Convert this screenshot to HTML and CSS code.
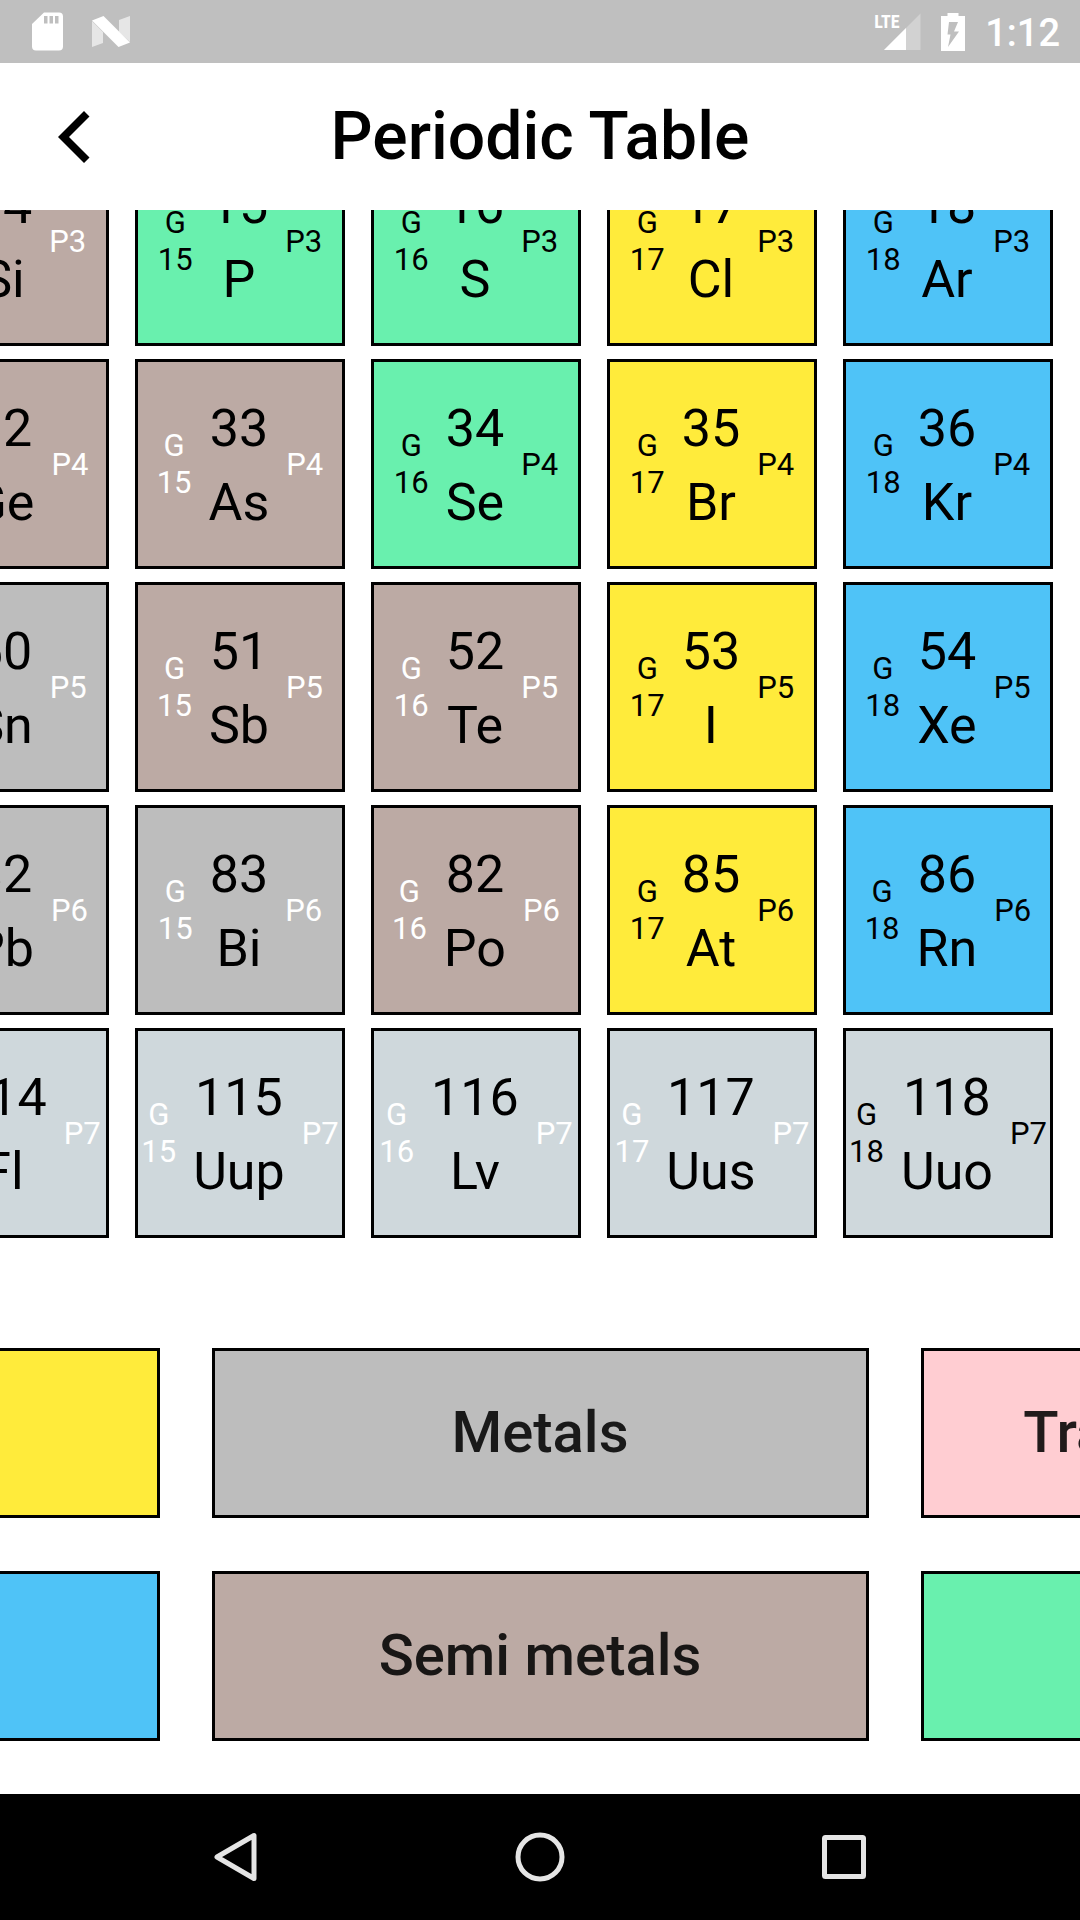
FILE: index.html
```html
<!DOCTYPE html>
<html lang="en">
<head>
<meta charset="utf-8">
<meta name="viewport" content="width=device-width, initial-scale=1">
<title>Periodic Table</title>
<link rel="stylesheet" href="styles.css">
</head>
<body>
<div class="status-bar">
  <div class="status-group">
    <svg class="icon-sd" viewBox="0 0 31 39" aria-hidden="true"><path fill="#fff" fill-rule="evenodd" d="M12 .5H27a4 4 0 0 1 4 4V34.500a4 4 0 0 1-4 4H4a4 4 0 0 1-4-4V12ZM12 4v7.500h3.500V4ZM17.500 4v7.500H21V4ZM23 4v7.500h3.500V4Z"/></svg>
    <svg class="icon-n" viewBox="0 0 38 31" aria-hidden="true"><path fill="#e6e6e6" d="M0 5 11 16V27L0 31ZM27 4 38 0V26L27 16Z"/><path fill="#fff" d="M0 4.500 11.500 0 38 26.500 26.500 31Z"/></svg>
  </div>
  <div class="status-group">
    <div class="signal">
      <svg class="icon-signal" viewBox="0 0 37 38" aria-hidden="true"><path fill="#d2d2d2" d="M36.500.5V37H0Z"/><path fill="#fff" d="M22 15V37H0Z"/></svg>
      <span class="signal-type">LTE</span>
    </div>
    <svg class="icon-battery" viewBox="0 0 24 38" aria-hidden="true"><path fill="#fff" d="M6.500 0h11v3H24v35H0V3h6.500Z"/><path fill="#bfbfbf" d="M8 9h9l-4 9.500h5L7 34l2.500-12.500H6.500Z"/></svg>
    <span class="clock">1:12</span>
  </div>
</div>
<header class="title-bar">
  <button class="back" type="button" aria-label="Back"><svg viewBox="0 0 32 52" aria-hidden="true"><path d="M26 0 31.500 5.500 11 26 31.500 46.500 26 52 0 26Z"/></svg></button>
  <h1 class="title">Periodic Table</h1>
</header>
<main class="content">
  <div class="elements">
    <button type="button" class="element semi"><span class="group">G<br>14</span><span class="core"><span>14</span><span>Si</span></span><span class="period">P3</span></button>
    <button type="button" class="element nonmetal dark"><span class="group">G<br>15</span><span class="core"><span>15</span><span>P</span></span><span class="period">P3</span></button>
    <button type="button" class="element nonmetal dark"><span class="group">G<br>16</span><span class="core"><span>16</span><span>S</span></span><span class="period">P3</span></button>
    <button type="button" class="element halogen dark"><span class="group">G<br>17</span><span class="core"><span>17</span><span>Cl</span></span><span class="period">P3</span></button>
    <button type="button" class="element noble dark"><span class="group">G<br>18</span><span class="core"><span>18</span><span>Ar</span></span><span class="period">P3</span></button>

    <button type="button" class="element semi"><span class="group">G<br>14</span><span class="core"><span>32</span><span>Ge</span></span><span class="period">P4</span></button>
    <button type="button" class="element semi"><span class="group">G<br>15</span><span class="core"><span>33</span><span>As</span></span><span class="period">P4</span></button>
    <button type="button" class="element nonmetal dark"><span class="group">G<br>16</span><span class="core"><span>34</span><span>Se</span></span><span class="period">P4</span></button>
    <button type="button" class="element halogen dark"><span class="group">G<br>17</span><span class="core"><span>35</span><span>Br</span></span><span class="period">P4</span></button>
    <button type="button" class="element noble dark"><span class="group">G<br>18</span><span class="core"><span>36</span><span>Kr</span></span><span class="period">P4</span></button>

    <button type="button" class="element metal"><span class="group">G<br>14</span><span class="core"><span>50</span><span>Sn</span></span><span class="period">P5</span></button>
    <button type="button" class="element semi"><span class="group">G<br>15</span><span class="core"><span>51</span><span>Sb</span></span><span class="period">P5</span></button>
    <button type="button" class="element semi"><span class="group">G<br>16</span><span class="core"><span>52</span><span>Te</span></span><span class="period">P5</span></button>
    <button type="button" class="element halogen dark"><span class="group">G<br>17</span><span class="core"><span>53</span><span>I</span></span><span class="period">P5</span></button>
    <button type="button" class="element noble dark"><span class="group">G<br>18</span><span class="core"><span>54</span><span>Xe</span></span><span class="period">P5</span></button>

    <button type="button" class="element metal"><span class="group">G<br>14</span><span class="core"><span>82</span><span>Pb</span></span><span class="period">P6</span></button>
    <button type="button" class="element metal"><span class="group">G<br>15</span><span class="core"><span>83</span><span>Bi</span></span><span class="period">P6</span></button>
    <button type="button" class="element semi"><span class="group">G<br>16</span><span class="core"><span>82</span><span>Po</span></span><span class="period">P6</span></button>
    <button type="button" class="element halogen dark"><span class="group">G<br>17</span><span class="core"><span>85</span><span>At</span></span><span class="period">P6</span></button>
    <button type="button" class="element noble dark"><span class="group">G<br>18</span><span class="core"><span>86</span><span>Rn</span></span><span class="period">P6</span></button>

    <button type="button" class="element unknown"><span class="group">G<br>14</span><span class="core"><span>114</span><span>Fl</span></span><span class="period">P7</span></button>
    <button type="button" class="element unknown"><span class="group">G<br>15</span><span class="core"><span>115</span><span>Uup</span></span><span class="period">P7</span></button>
    <button type="button" class="element unknown"><span class="group">G<br>16</span><span class="core"><span>116</span><span>Lv</span></span><span class="period">P7</span></button>
    <button type="button" class="element unknown"><span class="group">G<br>17</span><span class="core"><span>117</span><span>Uus</span></span><span class="period">P7</span></button>
    <button type="button" class="element unknown dark"><span class="group">G<br>18</span><span class="core"><span>118</span><span>Uuo</span></span><span class="period">P7</span></button>
  </div>
  <div class="legend">
    <button type="button" class="family halogen">Halogens</button>
    <button type="button" class="family metal">Metals</button>
    <button type="button" class="family transition">Transition metals</button>
    <button type="button" class="family noble">Noble gases</button>
    <button type="button" class="family semi">Semi metals</button>
    <button type="button" class="family nonmetal">Non metals</button>
  </div>
</main>
<nav class="nav-bar">
  <button type="button" aria-label="Back"><svg viewBox="0 0 50 50" aria-hidden="true"><path d="M43 3.500V46.500L6 25Z"/></svg></button>
  <button type="button" aria-label="Home"><svg viewBox="0 0 50 50" aria-hidden="true"><circle cx="25" cy="25" r="22"/></svg></button>
  <button type="button" aria-label="Overview"><svg viewBox="0 0 50 50" aria-hidden="true"><rect x="5.500" y="5.500" width="39" height="39" rx="1"/></svg></button>
</nav>
</body>
</html>
```
FILE: styles.css
```css
* {
  box-sizing: border-box;
}

body {
  display: flex;
  flex-direction: column;
  height: 100vh;
  margin: 0;
  overflow: hidden;
  background: #fff;
  color: #000;
  font-family: Roboto, sans-serif;
}

button {
  margin: 0;
  padding: 0;
  border: 0;
  background: none;
  color: inherit;
  font: inherit;
}

svg {
  display: block;
}

/* System status bar */
.status-bar {
  display: flex;
  flex: none;
  align-items: center;
  justify-content: space-between;
  height: 63px;
  padding: 0 20px 0 32px;
  background: #bfbfbf;
  color: #fff;
}

.status-group {
  display: flex;
  align-items: center;
}

.icon-sd {
  width: 31px;
  height: 39px;
  margin-right: 29px;
}

.icon-n {
  width: 38px;
  height: 31px;
}

.signal {
  position: relative;
  padding-left: 10px;
  margin-right: 20px;
}

.icon-signal {
  width: 37px;
  height: 38px;
}

.signal-type {
  position: absolute;
  top: 0;
  left: 0;
  font: bold 18px/18px "Liberation Sans Narrow", "Roboto Condensed", Roboto, sans-serif;
}

.icon-battery {
  width: 24px;
  height: 38px;
  margin-right: 20px;
}

.clock {
  padding-top: 2px;
  font-size: 38px;
  font-weight: 500;
  line-height: 44px;
}

/* Screen header */
.title-bar {
  display: grid;
  flex: none;
  grid-template-columns: 148px 1fr 148px;
  align-items: center;
  height: 147px;
}

.back {
  display: flex;
  align-items: center;
  justify-content: center;
  height: 147px;
}

.back svg {
  width: 32px;
  height: 52px;
}

.title {
  margin: 0;
  font-size: 66px;
  font-weight: 500;
  line-height: 76px;
  text-align: center;
}

/* Table and legend, scrolled to their end */
.content {
  display: flex;
  flex: 1;
  flex-direction: column;
  justify-content: flex-end;
  min-height: 0;
  overflow: hidden;
}

.elements {
  display: grid;
  flex: none;
  grid-template-columns: repeat(5, 210px);
  gap: 13px 26px;
  justify-content: end;
  padding-right: 27px;
}

.element {
  display: flex;
  align-items: center;
  justify-content: center;
  gap: 17px;
  height: 210px;
  border: 3px solid #000;
}

.group,
.period {
  color: #fff;
  font-size: 31px;
  line-height: 37px;
  text-align: center;
}

.dark .group,
.dark .period {
  color: #000;
}

.core {
  display: flex;
  flex-direction: column;
  align-items: center;
  padding-top: 3px;
  font-size: 52px;
  line-height: 74px;
}

.legend {
  display: grid;
  flex: none;
  grid-template-columns: repeat(3, 657px);
  gap: 53px 52px;
  justify-content: center;
  padding: 110px 0 53px;
}

.family {
  height: 170px;
  padding-bottom: 2px;
  border: 3px solid #000;
  color: rgba(0, 0, 0, 0.87);
  font-size: 58px;
  font-weight: 500;
  line-height: 68px;
}

.semi {
  background: #bcaaa4;
}

.metal {
  background: #bdbdbd;
}

.nonmetal {
  background: #69f0ae;
}

.halogen {
  background: #ffeb3b;
}

.noble {
  background: #4fc3f7;
}

.unknown {
  background: #cfd8dc;
}

.transition {
  background: #ffcdd2;
}

/* System navigation bar */
.nav-bar {
  display: grid;
  flex: none;
  grid-template-columns: repeat(3, 304px);
  justify-content: center;
  height: 126px;
  background: #000;
}

.nav-bar button {
  display: flex;
  align-items: center;
  justify-content: center;
}

.nav-bar svg {
  width: 50px;
  height: 50px;
  fill: none;
  stroke: #e5e5e5;
  stroke-width: 5;
  stroke-linejoin: round;
}
```
